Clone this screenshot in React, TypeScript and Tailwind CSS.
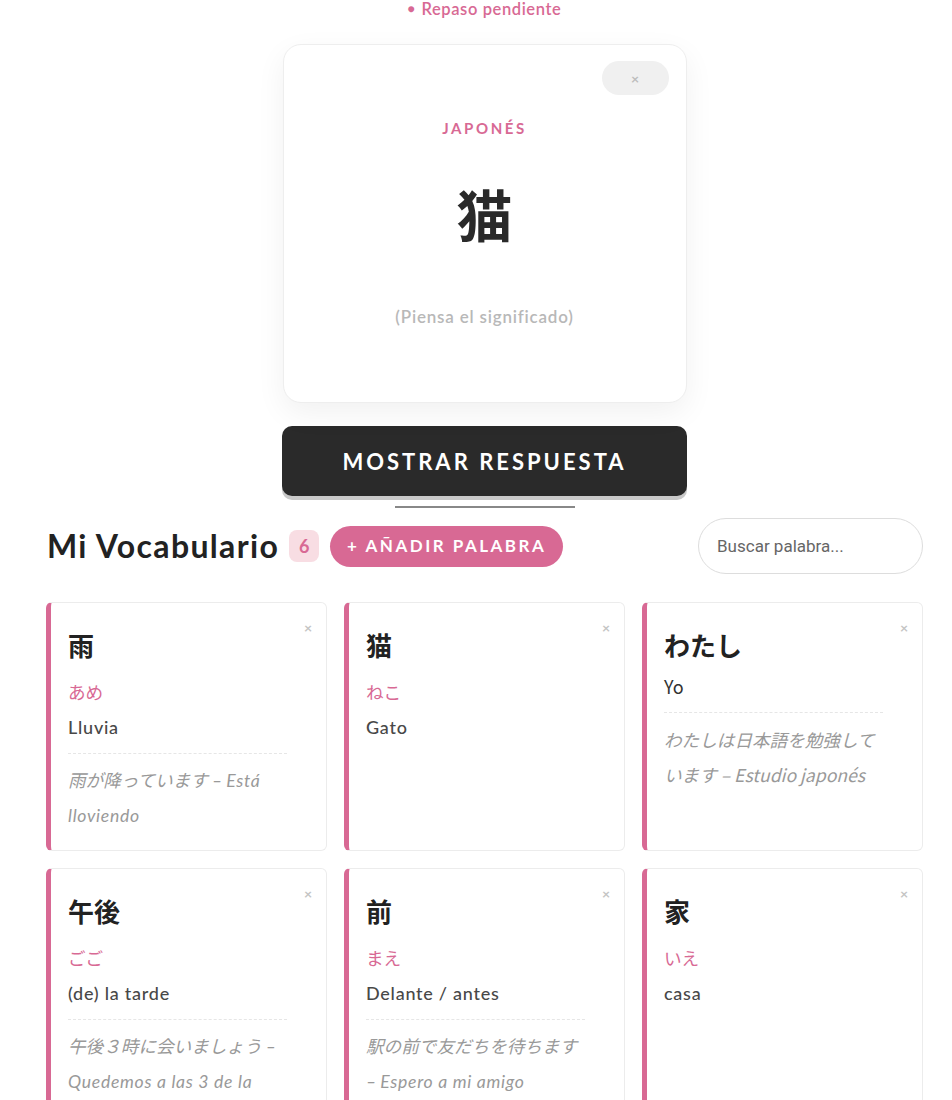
import React from "react";

type Word = {
  word: string;
  reading?: string;
  meaning: string;
  jp?: string;
  es?: string;
  alt?: boolean;
};

const words: Word[] = [
  { word: "雨", reading: "あめ", meaning: "Lluvia", jp: "雨が降っています", es: "Está lloviendo" },
  { word: "猫", reading: "ねこ", meaning: "Gato" },
  { word: "わたし", meaning: "Yo", jp: "わたしは日本語を勉強しています", es: "Estudio japonés", alt: true },
  { word: "午後", reading: "ごご", meaning: "(de) la tarde", jp: "午後３時に会いましょう", es: "Quedemos a las 3 de la tarde" },
  { word: "前", reading: "まえ", meaning: "Delante / antes", jp: "駅の前で友だちを待ちます", es: "Espero a mi amigo delante de la estación" },
  { word: "家", reading: "いえ", meaning: "casa" },
];

function WordCard({ w }: { w: Word }) {
  return (
    <div className="relative rounded-[6px] border border-[#ececec] border-l-[5px] border-l-[#d86994] bg-white pl-[17px] pr-[39px] pt-[24px] pb-[17px]">
      <span className="absolute right-[14px] top-[15px] text-[14px] leading-[20px] font-bold text-[#c4c4c4]">×</span>
      <div className="font-['Noto_Sans_CJK_JP',sans-serif] text-[26px] leading-[36px] font-bold text-[#222]">{w.word}</div>
      {w.reading && (
        <div className="mt-[17px] mb-[5px] font-['Noto_Sans_CJK_JP',sans-serif] text-[17.6px] leading-[24px] text-[#d86994]">
          {w.reading}
        </div>
      )}
      <div
        className={
          w.alt
            ? "mt-[10px] font-['Noto_Sans_CJK_JP',sans-serif] text-[18px] leading-[26px] text-[#333]"
            : "mt-[10px] text-[18px] leading-[26px] font-medium tracking-[0.75px] text-[#484848]"
        }
      >
        {w.meaning}
      </div>
      {w.jp && (
        <>
          <div className="mt-[13px] border-t border-dashed border-[#e6e6e6]" />
          <div
            className={
              w.alt
                ? "mt-[9px] font-['Noto_Sans_CJK_JP',sans-serif] italic text-[17.6px] leading-[35px] text-[#999]"
                : "mt-[9px] italic text-[17.6px] leading-[35px] text-[#999]"
            }
          >
            <span>{w.jp}</span> – <span className={w.alt ? "" : "tracking-[0.7px]"}>{w.es}</span>
          </div>
        </>
      )}
    </div>
  );
}

export default function App() {
  return (
    <div className="min-h-[1100px] bg-white font-['Lato','Noto_Sans_CJK_JP',sans-serif] text-[#222]">
      <div className="ml-[46px] w-[877px] pb-10">
        <div className="flex flex-col items-center">
          <div className="h-[18px] text-[16.5px] leading-[18px] font-semibold tracking-[0.6px] text-[#d86994]">
            <span className="mr-[6px] text-[12px] align-[2px]">●</span>Repaso pendiente
          </div>

          <div className="relative mt-[26px] flex h-[359px] w-[404px] flex-col items-center rounded-[18px] border border-[#eeeeee] bg-white shadow-[0_10px_30px_rgba(0,0,0,0.06)]">
            <div className="absolute right-[17px] top-[16px] flex h-[34px] w-[67px] items-center justify-center rounded-full bg-[#f0f0f0] text-[14px] font-bold text-[#bdbdbd]">
              ×
            </div>
            <div className="mt-[73px] text-[15px] leading-[20px] font-bold tracking-[2.6px] text-[#d86994]">JAPONÉS</div>
            <div className="mt-[43px] font-['Noto_Sans_CJK_JP',sans-serif] text-[56px] leading-[64px] font-bold text-[#2a2a2a]">
              猫
            </div>
            <div className="mt-[60px] text-[17px] leading-[24px] font-semibold tracking-[0.8px] text-[#b8b8b8]">(Piensa el significado)</div>
          </div>

          <button className="mt-[23px] flex h-[70px] w-[405px] items-center justify-center rounded-[10px] bg-[#2a2a2a] text-[22px] font-bold tracking-[3px] text-white shadow-[0_4px_0_#c9c9c9]">
            MOSTRAR RESPUESTA
          </button>
          <div className="mt-[10px] h-[2px] w-[180px] bg-[#888]" />
        </div>

        <div className="mt-[10px] flex h-[56px] items-center justify-between">
          <div className="flex items-center">
            <h2 className="ml-[1px] text-[32px] leading-[40px] font-bold tracking-[1.35px] text-[#222]">Mi Vocabulario</h2>
            <span className="ml-[10px] flex h-[32px] w-[30px] items-center justify-center rounded-[8px] bg-[#f8dde3] text-[18px] font-bold text-[#d86994]">
              6
            </span>
            <button className="ml-[11px] flex h-[41px] w-[233px] items-center justify-center rounded-full bg-[#d86994] text-[17px] font-bold tracking-[2.5px] text-white">
              + AÑADIR PALABRA
            </button>
          </div>
          <input
            className="h-[56px] w-[225px] rounded-full border border-[#dddddd] bg-white pl-[18px] font-['Roboto',sans-serif] text-[17px] text-[#333] outline-none placeholder:text-[#666]"
            placeholder="Buscar palabra..."
          />
        </div>

        <div className="mt-[28px] grid grid-cols-3 gap-[17px]">
          {words.map((w) => (
            <WordCard key={w.word} w={w} />
          ))}
        </div>
      </div>
    </div>
  );
}
